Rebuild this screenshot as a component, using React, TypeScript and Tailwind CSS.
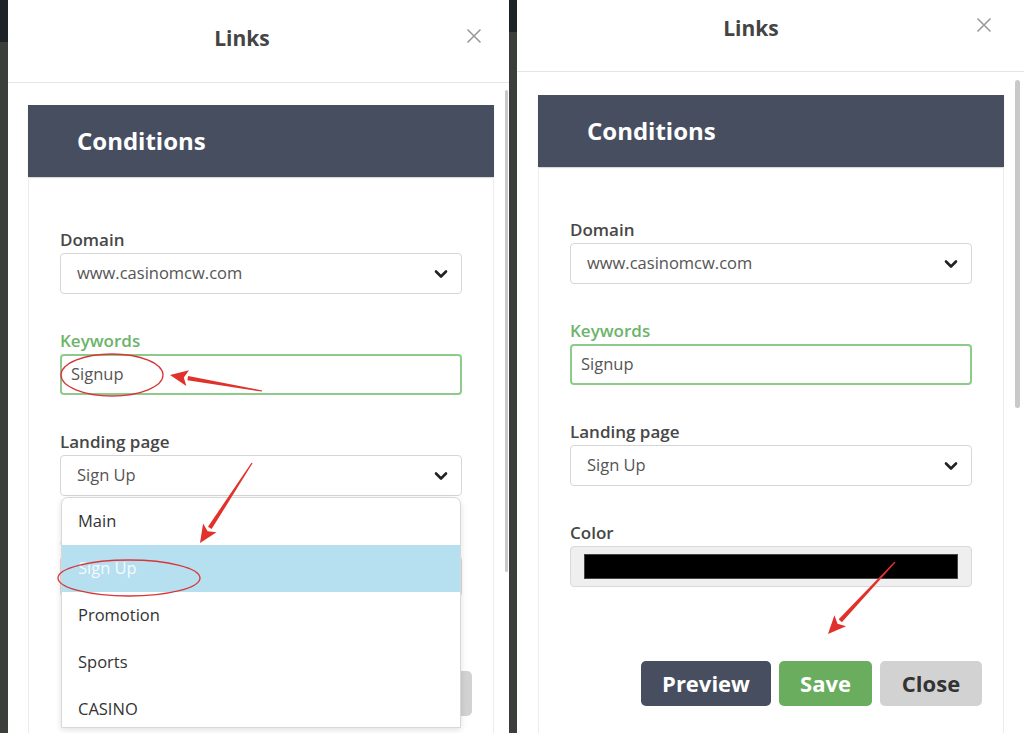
import React from "react";

const Chevron = () => (
  <svg width="14" height="10" viewBox="0 0 14 10" className="absolute right-[13px] top-1/2 -translate-y-1/2">
    <path d="M2 2.5 L7 7.5 L12 2.5" fill="none" stroke="#222" strokeWidth="2.6" strokeLinecap="round" strokeLinejoin="round" />
  </svg>
);

const CloseX = () => (
  <svg width="16" height="16" viewBox="0 0 16 16">
    <path d="M1.5 1.5 L14.5 14.5 M14.5 1.5 L1.5 14.5" stroke="#9a9a9a" strokeWidth="1.6" />
  </svg>
);

function Field({ label, green, children }: { label: string; green?: boolean; children: React.ReactNode }) {
  return (
    <div className="mb-[37px]">
      <div className={`h-[20px] leading-[20px] text-[17px] font-semibold mb-[3px] ${green ? "text-[#6cb46a]" : "text-[#474747]"}`}>{label}</div>
      {children}
    </div>
  );
}

function SelectBox({ value }: { value: string }) {
  return (
    <div className="relative h-[41px] border border-[#d6d6d6] rounded-[4px] bg-white flex items-center pl-[16px] text-[16.5px] text-[#555]">
      {value}
      <Chevron />
    </div>
  );
}

function Form() {
  return (
    <div className="flex-1 flex flex-col border-x border-[#ececec]">
      <div className="px-[31px] pt-[53px]">
        <Field label="Domain">
          <SelectBox value="www.casinomcw.com" />
        </Field>
        <Field label="Keywords" green>
          <div className="h-[41px] border-2 border-[#8ccb89] rounded-[4px] bg-white flex items-center pl-[9px] text-[16.5px] text-[#555]">Signup</div>
        </Field>
        <Field label="Landing page">
          <SelectBox value="Sign Up" />
        </Field>
        <Field label="Color">
          <div className="h-[41px] border border-[#d9d9d9] rounded-[4px] bg-[#efefef] px-[13px] py-[7px]">
            <div className="h-full bg-black border border-[#444]" />
          </div>
        </Field>
      </div>
      <div className="flex justify-end gap-[8px] pr-[21px] mt-[37px]">
        <button className="w-[130px] h-[45px] rounded-[5px] bg-[#474e60] text-white font-bold text-[22px]">Preview</button>
        <button className="w-[93px] h-[45px] rounded-[5px] bg-[#6aad5f] text-white font-bold text-[22px]">Save</button>
        <button className="w-[102px] h-[45px] rounded-[5px] bg-[#d2d2d2] text-[#333] font-bold text-[22px]">Close</button>
      </div>
    </div>
  );
}

function Card() {
  return (
    <div className="w-[466px] flex-1 flex flex-col">
      <div className="h-[72px] bg-[#474e60] flex items-center pl-[49px] text-white font-bold text-[24px] shadow-[0_1px_1px_rgba(0,0,0,0.15)]">
        Conditions
      </div>
      <Form />
    </div>
  );
}

function Arrow({ x1, y1, x2, y2 }: { x1: number; y1: number; x2: number; y2: number }) {
  const dx = x2 - x1;
  const dy = y2 - y1;
  const len = Math.sqrt(dx * dx + dy * dy);
  const ux = dx / len;
  const uy = dy / len;
  const nx = -uy;
  const ny = ux;
  const headLen = 18;
  const headW = 8;
  const bx = x2 - ux * headLen;
  const by = y2 - uy * headLen;
  const shaft = [
    [x1 + nx * 0.6, y1 + ny * 0.6],
    [bx + nx * 2.2, by + ny * 2.2],
    [bx - nx * 2.2, by - ny * 2.2],
    [x1 - nx * 0.6, y1 - ny * 0.6],
  ];
  const head = [
    [x2, y2],
    [bx + nx * headW, by + ny * headW],
    [bx + ux * 4, by + uy * 4],
    [bx - nx * headW, by - ny * headW],
  ];
  return (
    <g fill="#e0322b">
      <polygon points={shaft.map((p) => p.join(",")).join(" ")} />
      <polygon points={head.map((p) => p.join(",")).join(" ")} />
    </g>
  );
}

export default function App() {
  return (
    <div className="relative w-[1024px] h-[733px] overflow-hidden bg-white flex font-['Open_Sans',sans-serif]">
      {/* left dark strip */}
      <div className="w-[8px] flex flex-col">
        <div className="h-[42px] bg-[#1d2327]" />
        <div className="flex-1 bg-[#3b3e3b]" />
      </div>

      {/* left panel */}
      <div className="relative w-[501px] flex flex-col bg-white">
        <div className="relative h-[83px] border-b border-[#e6e6e6] shrink-0">
          <div className="w-[468px] text-center pt-[24px] leading-[28px] text-[21px] font-bold text-[#444]">Links</div>
          <div className="absolute left-[458px] top-[28px]"><CloseX /></div>
        </div>
        <div className="flex-1 flex flex-col pl-[20px] pt-[22px]">
          <Card />
        </div>
        <div className="absolute left-[497px] top-[90px] w-[3px] h-[482px] bg-[#c9c9c9] rounded-full" />
        {/* dropdown */}
        <div className="absolute left-[53px] top-[497px] w-[400px] h-[231px] bg-white border border-[#d8d8d8] rounded-t-[7px] shadow-[0_2px_6px_rgba(0,0,0,0.12)] overflow-hidden text-[16.5px] text-[#333]">
          <div className="h-[47px] flex items-center pl-[16px]">Main</div>
          <div className="h-[47px] flex items-center pl-[16px] bg-[#b6dff0] text-[#f4fafd]">Sign Up</div>
          <div className="h-[47px] flex items-center pl-[16px]">Promotion</div>
          <div className="h-[47px] flex items-center pl-[16px]">Sports</div>
          <div className="h-[47px] flex items-center pl-[16px]">CASINO</div>
        </div>
      </div>

      {/* middle dark strip */}
      <div className="w-[8px] flex flex-col">
        <div className="h-[32px] bg-[#1d2327]" />
        <div className="flex-1 bg-[#3b3e3b]" />
      </div>

      {/* right panel */}
      <div className="relative flex-1 flex flex-col bg-white">
        <div className="relative h-[72px] border-b border-[#e6e6e6] shrink-0">
          <div className="w-[468px] text-center pt-[14px] leading-[28px] text-[21px] font-bold text-[#444]">Links</div>
          <div className="absolute left-[459px] top-[17px]"><CloseX /></div>
        </div>
        <div className="flex-1 flex flex-col pl-[21px] pt-[23px]">
          <Card />
        </div>
        <div className="absolute left-[498px] top-[80px] w-[5px] h-[328px] bg-[#c9c9c9] rounded-full" />
      </div>

      {/* annotations */}
      <svg className="absolute inset-0 pointer-events-none" width="1024" height="733">
        <ellipse cx="112" cy="375" rx="51" ry="21" fill="none" stroke="#d9363a" strokeWidth="1.3" />
        <ellipse cx="129" cy="578" rx="71" ry="18" fill="none" stroke="#d9363a" strokeWidth="1.3" />
        <Arrow x1={262} y1={391} x2={170} y2={375} />
        <Arrow x1={252} y1={463} x2={200} y2={543} />
        <Arrow x1={895} y1={562} x2={828} y2={634} />
      </svg>
    </div>
  );
}
